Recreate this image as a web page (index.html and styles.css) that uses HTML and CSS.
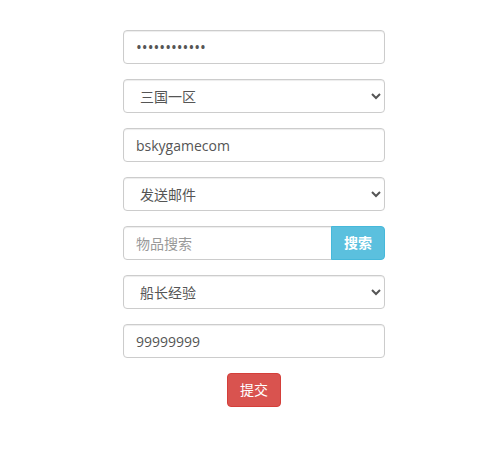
FILE: index.html
```html
<!DOCTYPE html>
<html lang="zh-CN">
<head>
<meta charset="utf-8">
<title>表单</title>
<link rel="stylesheet" href="styles.css">
</head>
<body>
<form class="panel">
  <input class="form-control secret" type="password" value="123456789012">
  <select class="form-control">
    <option>三国一区</option>
  </select>
  <input class="form-control" type="text" value="bskygamecom">
  <select class="form-control">
    <option>发送邮件</option>
  </select>
  <div class="input-group">
    <input class="form-control grouped" type="text" placeholder="物品搜索">
    <button class="btn btn-info" type="button">搜索</button>
  </div>
  <select class="form-control">
    <option>船长经验</option>
  </select>
  <input class="form-control" type="text" value="99999999">
  <div class="actions">
    <button class="btn btn-danger" type="button">提交</button>
  </div>
</form>
</body>
</html>
```

FILE: styles.css
```css
html, body {
  margin: 0;
  padding: 0;
  background: #fff;
}
body {
  font-family: "Open Sans", "Noto Sans CJK SC", sans-serif;
  font-size: 14px;
  line-height: 1.42857;
  color: #333;
}
.panel {
  width: 262px;
  margin: 30px 0 0 123px;
  display: flex;
  flex-direction: column;
  gap: 15px;
}
.form-control {
  box-sizing: border-box;
  display: block;
  width: 100%;
  height: 34px;
  margin: 0;
  padding: 6px 12px;
  font-family: inherit;
  font-size: 14px;
  line-height: 1.42857;
  color: #555;
  background: #fff;
  border: 1px solid #ccc;
  border-radius: 4px;
  box-shadow: inset 0 1px 1px rgba(0,0,0,.075);
  outline: none;
}
.form-control.secret {
  font-size: 15.5px;
  line-height: 20px;
}
.form-control::placeholder {
  color: #999;
}
.input-group {
  display: flex;
}
.form-control.grouped {
  flex: 1;
  min-width: 0;
  border-radius: 4px 0 0 4px;
}
.btn {
  box-sizing: border-box;
  height: 34px;
  padding: 6px 12px;
  font-family: inherit;
  font-size: 14px;
  line-height: 1.42857;
  color: #fff;
  border: 1px solid transparent;
  border-radius: 4px;
  cursor: pointer;
}
.btn-info {
  width: 54px;
  flex: none;
  font-weight: 700;
  background: #5bc0de;
  border-color: #46b8da;
  border-radius: 0 4px 4px 0;
  margin-left: -1px;
}
.btn-danger {
  width: 54px;
  background: #d9534f;
  border-color: #d43f3a;
}
.actions {
  display: flex;
  justify-content: center;
}
```
